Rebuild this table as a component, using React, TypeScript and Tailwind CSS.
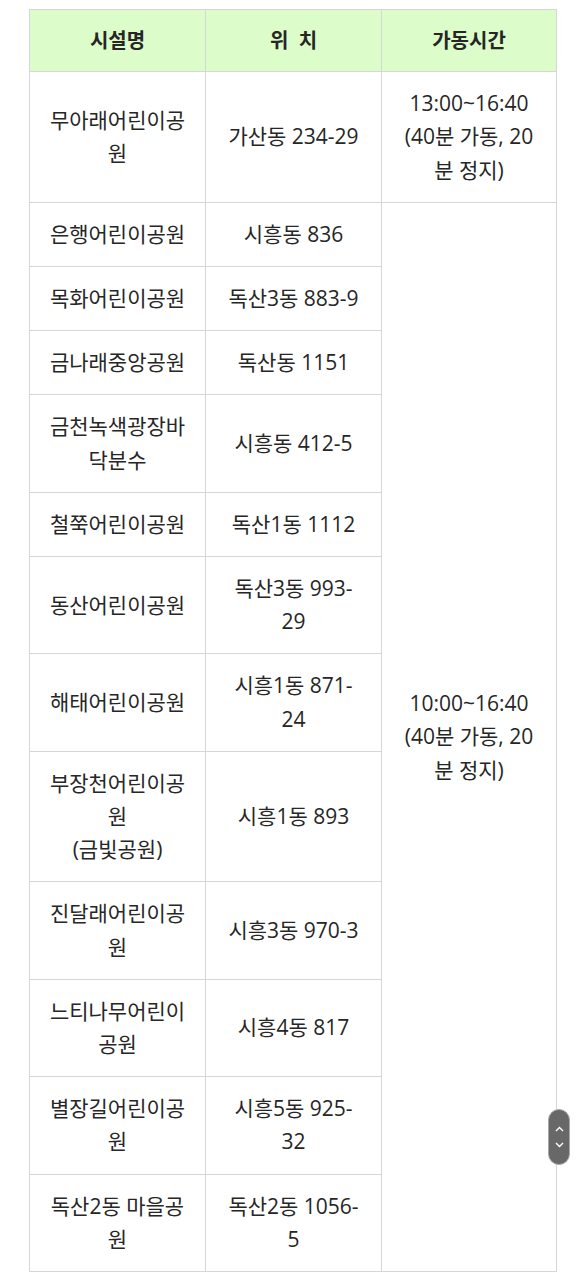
const rows: { name: React.ReactNode; addr: string }[] = [
  { name: "은행어린이공원", addr: "시흥동 836" },
  { name: "목화어린이공원", addr: "독산3동 883-9" },
  { name: "금나래중앙공원", addr: "독산동 1151" },
  { name: "금천녹색광장바닥분수", addr: "시흥동 412-5" },
  { name: "철쭉어린이공원", addr: "독산1동 1112" },
  { name: "동산어린이공원", addr: "독산3동 993-29" },
  { name: "해태어린이공원", addr: "시흥1동 871-24" },
  {
    name: (
      <>
        부장천어린이공원
        <br />
        (금빛공원)
      </>
    ),
    addr: "시흥1동 893",
  },
  { name: "진달래어린이공원", addr: "시흥3동 970-3" },
  { name: "느티나무어린이공원", addr: "시흥4동 817" },
  { name: "별장길어린이공원", addr: "시흥5동 925-32" },
  { name: "독산2동 마을공원", addr: "독산2동 1056-5" },
];

const cell = "border border-[#d6d6d6] px-[18px] py-[15px] text-center align-middle";

export default function App() {
  return (
    <div
      className="min-h-screen bg-white pt-[9px] pl-[29px] text-[#262626] text-[21px] leading-[33.2px]"
      style={{ fontFamily: '"Open Sans", "Noto Sans CJK KR", sans-serif' }}
    >
      <table className="w-[527px] table-fixed border-collapse">
        <colgroup>
          <col className="w-[176px]" />
          <col className="w-[176px]" />
          <col className="w-[175px]" />
        </colgroup>
        <thead>
          <tr className="bg-[#dcfcc9]">
            <th className={`${cell} !py-[14px] text-[20px] font-bold`}>시설명</th>
            <th className={`${cell} !py-[14px] text-[20px] font-bold`}>위&nbsp; 치</th>
            <th className={`${cell} !py-[14px] text-[20px] font-bold`}>가동시간</th>
          </tr>
        </thead>
        <tbody>
          <tr>
            <td className={cell}>무아래어린이공원</td>
            <td className={cell}>가산동 234-29</td>
            <td className={cell}>13:00~16:40 (40분 가동, 20 분 정지)</td>
          </tr>
          {rows.map((r, i) => (
            <tr key={i}>
              <td className={cell}>{r.name}</td>
              <td className={cell}>{r.addr}</td>
              {i === 0 && (
                <td rowSpan={rows.length} className={cell}>
                  10:00~16:40 (40분 가동, 20 분 정지)
                </td>
              )}
            </tr>
          ))}
        </tbody>
      </table>
      <div className="h-[9px]" />

      {/* scroll up/down pill */}
      <div className="fixed left-[548px] top-[1109px] flex h-[56px] w-[22px] flex-col items-center justify-center gap-[10px] rounded-full border border-[#a8a8a8] bg-[#686868]">
        <svg width="9" height="6" viewBox="0 0 9 6" fill="none">
          <path d="M1 5 L4.5 1.5 L8 5" stroke="white" strokeWidth="1.4" />
        </svg>
        <svg width="9" height="6" viewBox="0 0 9 6" fill="none">
          <path d="M1 1 L4.5 4.5 L8 1" stroke="white" strokeWidth="1.4" />
        </svg>
      </div>
    </div>
  );
}
